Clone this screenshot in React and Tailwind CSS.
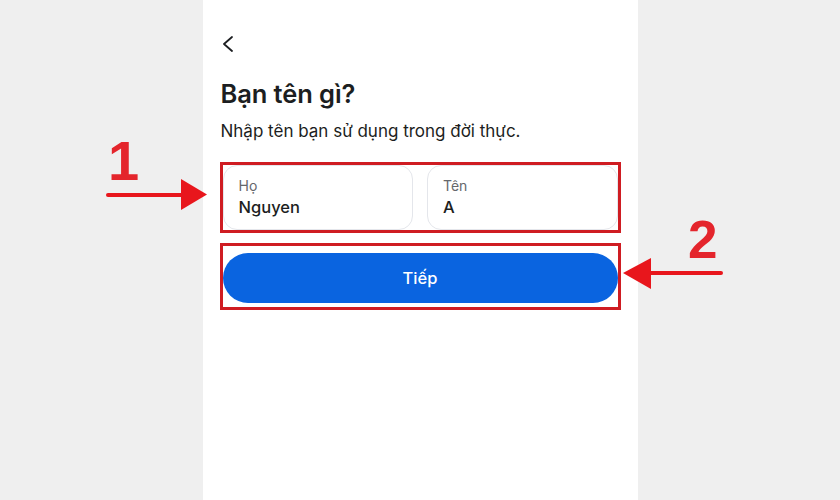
export default function App() {
  const fields = [
    { label: 'Họ', value: 'Nguyen' },
    { label: 'Tên', value: 'A' }
  ]

  return (
    <div className="relative flex h-[500px] w-[840px] justify-center overflow-hidden bg-[#efefef] font-['Inter',sans-serif] text-[#1c1e21]">
      {/* Phone screen */}
      <div className="h-full w-[435px] bg-white px-[17px] pt-[36px]">
        <svg className="ml-[2px] block h-[16px] w-[12px]" viewBox="0 0 12 16" fill="none" stroke="#1c1e21" strokeWidth="1.8" strokeLinecap="round" strokeLinejoin="round">
          <path d="M10 1 L2 8 L10 15" />
        </svg>

        <h1 className="ml-[1px] mt-[26px] text-[25.5px] font-semibold leading-[32px] tracking-[-0.1px]">Bạn tên gì?</h1>
        <p className="ml-[1px] mt-[9px] text-[17px] leading-[24px]">Nhập tên bạn sử dụng trong đời thực.</p>

        {/* Name fields, highlighted */}
        <div className="mt-[19px] flex gap-[14px] border-[3px] border-[#cf1c22]">
          {fields.map(f => (
            <div key={f.label} className="h-[65px] flex-1 rounded-[14px] border border-[#e4e6eb] px-[15px] pt-[10px]">
              <div className="text-[14px] leading-[20px] text-[#65676b]">{f.label}</div>
              <div className="text-[16.5px] font-medium leading-[22px]">{f.value}</div>
            </div>
          ))}
        </div>

        {/* Next button, highlighted */}
        <div className="mt-[10px] border-[3px] border-[#cf1c22] pb-[4px] pt-[7px]">
          <button className="flex h-[50px] w-full items-center justify-center rounded-full bg-[#0a64e0] text-[16.5px] font-medium text-white">
            Tiếp
          </button>
        </div>
      </div>

      {/* Annotations */}
      <div className="absolute left-[108px] top-[133px] font-['Liberation_Sans',Arial,sans-serif] text-[56px] font-bold leading-none text-[#e4252c]">1</div>
      <div className="absolute left-[688px] top-[213px] font-['Liberation_Sans',Arial,sans-serif] text-[53px] font-bold leading-none text-[#e4252c]">2</div>

      <svg className="absolute left-[104px] top-[176px] h-[36px] w-[106px]" viewBox="0 0 106 36">
        <line x1="4" y1="19" x2="80" y2="19" stroke="#e8161c" strokeWidth="4" strokeLinecap="round" />
        <polygon points="77,3 103,18.5 77,34" fill="#e8161c" />
      </svg>
      <svg className="absolute left-[620px] top-[255px] h-[36px] w-[106px]" viewBox="0 0 106 36">
        <line x1="26" y1="18" x2="101" y2="18" stroke="#e8161c" strokeWidth="4" strokeLinecap="round" />
        <polygon points="31,3 3,18 31,34" fill="#e8161c" />
      </svg>
    </div>
  )
}
